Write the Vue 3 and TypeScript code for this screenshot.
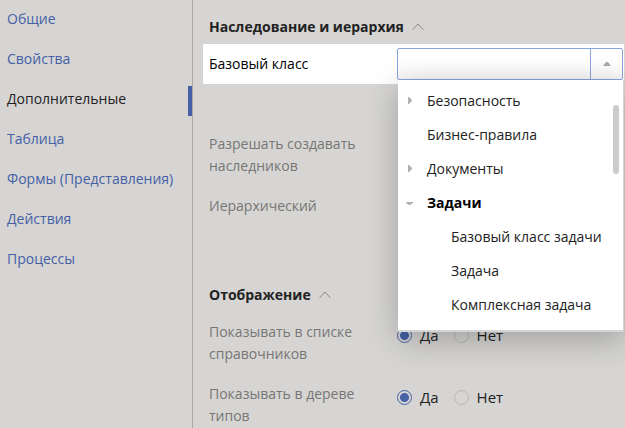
<script setup lang="ts">
import { ref } from 'vue'

interface TreeItem {
  label: string
  state?: 'open' | 'closed'
  child?: boolean
}

const tabs = ['Общие', 'Свойства', 'Дополнительные', 'Таблица', 'Формы (Представления)', 'Действия', 'Процессы']
const activeTab = ref('Дополнительные')

const tree: TreeItem[] = [
  { label: 'Безопасность', state: 'closed' },
  { label: 'Бизнес-правила' },
  { label: 'Документы', state: 'closed' },
  { label: 'Задачи', state: 'open' },
  { label: 'Базовый класс задачи', child: true },
  { label: 'Задача', child: true },
  { label: 'Комплексная задача', child: true },
]

const baseClass = ref('')
const toggles = ref([
  { id: 'lists', label: 'Показывать в списке справочников', value: 'Да' },
  { id: 'tree', label: 'Показывать в дереве типов', value: 'Да' },
])
</script>

<template>
  <div class="page">
    <nav class="tabs">
      <a
        v-for="tab in tabs"
        :key="tab"
        href="#"
        class="tab"
        :class="{ active: tab === activeTab }"
        @click.prevent="activeTab = tab"
      >{{ tab }}</a>
    </nav>

    <main class="content">
      <section class="section inheritance">
        <h2 class="heading">
          Наследование и иерархия
          <svg class="chevron" viewBox="0 0 12 8"><path d="M0.5 7 L6 1 L11.5 7" /></svg>
        </h2>
        <div class="row highlighted">
          <label class="label" for="base-class">Базовый класс</label>
          <div class="combo">
            <input id="base-class" v-model="baseClass" class="combo-input" type="text" />
            <button class="combo-button" type="button" aria-label="Базовый класс">
              <svg class="arrow" viewBox="0 0 8 4"><path d="M0 4 L3 0 H5 L8 4 Z" /></svg>
            </button>
            <div class="menu">
              <ul class="tree">
                <li
                  v-for="item in tree"
                  :key="item.label"
                  class="tree-item"
                  :class="[item.state, { child: item.child }]"
                >
                  <span class="marker">
                    <svg v-if="item.state === 'closed'" class="marker-icon" viewBox="0 0 8 8"><path d="M2 0 H3 L6 3 V4 L3 7 H2 Z" /></svg>
                    <svg v-if="item.state === 'open'" class="marker-icon" viewBox="0 0 8 8"><path d="M0 3 H7 V4 L4 6 H3 L0 4 Z" /></svg>
                  </span>
                  {{ item.label }}
                </li>
              </ul>
              <span class="thumb"></span>
            </div>
          </div>
        </div>
        <div class="row spaced"><span class="label">Разрешать создавать наследников</span></div>
        <div class="row"><span class="label">Иерархический</span></div>
      </section>

      <section class="section">
        <h2 class="heading">
          Отображение
          <svg class="chevron" viewBox="0 0 12 8"><path d="M0.5 7 L6 1 L11.5 7" /></svg>
        </h2>
        <div v-for="t in toggles" :key="t.id" class="row" role="radiogroup" :aria-labelledby="t.id">
          <span :id="t.id" class="label">{{ t.label }}</span>
          <div class="options">
            <label v-for="option in ['Да', 'Нет']" :key="option" class="option">
              <input v-model="t.value" class="radio" type="radio" :name="t.id" :value="option" />
              {{ option }}
            </label>
          </div>
        </div>
      </section>
    </main>
  </div>
</template>

<style>
body {
  background: #d6d5d3;
}
</style>

<style scoped>
.page {
  display: flex;
  box-sizing: border-box;
  min-height: 100vh;
  overflow: hidden;
  font: 14px/22px 'Open Sans', 'Noto Sans', sans-serif;
  color: #222;
  background: #d6d5d3;
}

.tabs {
  display: flex;
  flex: 0 0 192px;
  flex-direction: column;
  gap: 10px;
  padding-top: 6px;
  border-right: 1px solid #aaa9a8;
}

.tab {
  padding: 2px 0 6px 7px;
  border-right: 4px solid transparent;
  color: #4560a5;
  text-decoration: none;
}

.tab.active {
  border-right-color: #4560a5;
  color: #222;
}

.content {
  flex: 1;
  min-width: 0;
  padding: 16px 1px 0 10px;
}

.inheritance {
  margin-bottom: 58px;
}

.heading {
  display: flex;
  align-items: center;
  gap: 8px;
  margin: 0 0 6px;
  padding-left: 6px;
  font-size: 14px;
  line-height: 22px;
}

.chevron {
  width: 12px;
  height: 8px;
  fill: none;
  stroke: #8c8b8a;
}

.row {
  display: flex;
  align-items: flex-start;
  padding: 9px 0 9px 6px;
}

.row:last-child {
  padding-bottom: 0;
}

.inheritance .row:last-child {
  padding-bottom: 9px;
}

.spaced {
  margin-top: 40px;
}

.label {
  flex: 0 0 160px;
  margin-right: 28px;
  color: #777675;
}

.highlighted {
  padding: 4px 1px 4px 6px;
  background: #fff;
}

.highlighted .label {
  line-height: 32px;
  color: #000;
}

.combo {
  position: relative;
  display: flex;
  flex: 1;
  box-sizing: border-box;
  min-width: 0;
  height: 32px;
  border: 1px solid #88a5dd;
  border-radius: 2px;
  background: linear-gradient(#fff 40%, #f7f7f7);
}

.combo-input {
  flex: 1;
  min-width: 0;
  padding: 0 8px;
  border: 0;
  outline: 0;
  font: inherit;
  background: none;
}

.combo-button {
  display: flex;
  flex: 0 0 32px;
  align-items: center;
  justify-content: center;
  padding: 0;
  border: 0;
  border-left: 1px solid #88a5dd;
  background: none;
}

.arrow {
  width: 8px;
  height: 4px;
  fill: #aaa;
}

.menu {
  position: absolute;
  z-index: 1;
  top: 31px;
  right: -2px;
  left: 0;
  padding: 4px 0 8px;
  border-right: 1px solid #d4d4d4;
  border-bottom: 2px solid #d4d4d4;
  background: #fff;
  box-shadow: 0 8px 30px rgba(0, 0, 0, 0.25);
}

.tree {
  margin: 0;
  padding: 0;
  list-style: none;
}

.tree-item {
  display: flex;
  align-items: center;
  height: 34px;
  color: #222;
  white-space: nowrap;
}

.tree-item.open {
  font-weight: 700;
  color: #000;
}

.marker {
  display: flex;
  flex: 0 0 21px;
  padding-left: 8px;
}

.child .marker {
  flex-basis: 45px;
}

.marker-icon {
  width: 8px;
  height: 8px;
  fill: #b0b0b0;
}

.thumb {
  position: absolute;
  top: 25px;
  right: 4px;
  width: 6px;
  height: 69px;
  border-radius: 3px;
  background: #ccc;
}

.options {
  display: flex;
  gap: 15px;
  padding-top: 3px;
}

.option {
  display: flex;
  align-items: center;
  gap: 8px;
  font-size: 15px;
}

.radio {
  width: 15px;
  height: 15px;
  margin: 0;
  border: 1px solid #b9b8b7;
  border-radius: 50%;
  appearance: none;
}

.radio:checked {
  border-color: #4560a5;
  background: radial-gradient(circle, #4560a5 4px, transparent 5px);
}
</style>
